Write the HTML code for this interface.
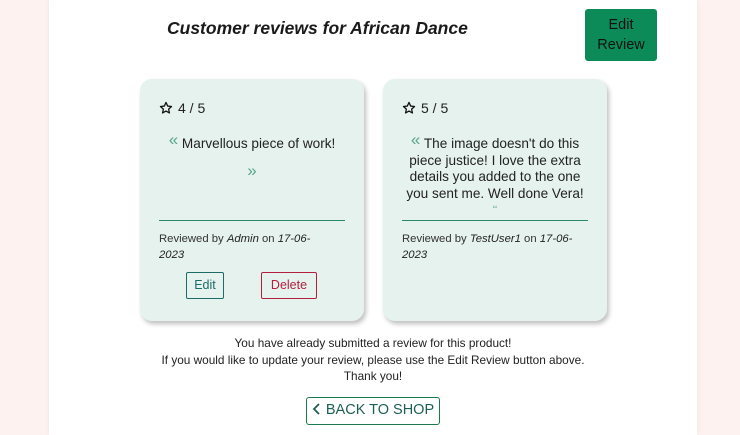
<!DOCTYPE html>
<html><head><meta charset="utf-8">
<style>
*{margin:0;padding:0;box-sizing:border-box}
html,body{width:740px;height:435px;overflow:hidden;background:#fdf2ef;font-family:"Liberation Sans",sans-serif;color:#222}
.panel{position:absolute;left:49px;top:0;width:648px;height:435px;background:#fff;box-shadow:0 0 6px rgba(0,0,0,0.06)}
h1{position:absolute;left:167px;top:18px;font-size:17.5px;font-style:italic;font-weight:bold;color:#1a1a1a;letter-spacing:0px}
.editbtn{position:absolute;left:585px;top:9px;width:72px;height:52px;background:#0c8a57;border-radius:3px;color:#111;font-size:14.5px;text-align:center;line-height:20px;padding-top:6px}
.card{position:absolute;top:79px;width:224px;height:242px;background:#e6f2ee;border-radius:12px;box-shadow:2px 3px 5px rgba(0,0,0,0.25)}
.rating{position:absolute;left:19px;top:21px;font-size:14px;color:#222;display:flex;align-items:center;gap:5px}
.text{position:absolute;left:16px;right:16px;top:52px;text-align:center;font-size:13.6px;line-height:20px;color:#222}
.q{color:#5aa58a;font-size:17px;vertical-align:3px}
.line{position:absolute;left:19px;right:19px;top:141px;border-top:1px solid #2a8a68}
.by{position:absolute;left:19px;right:19px;top:152px;font-size:11.3px;line-height:16px;color:#333}
.by i{color:#222}
.btn{position:absolute;top:193px;height:27px;background:transparent;font-size:12.5px;line-height:25px;text-align:center;border-radius:2px}
.msg{position:absolute;left:49px;width:648px;top:335px;text-align:center;font-size:11.8px;line-height:16.5px;color:#222}
.back{position:absolute;left:306px;top:397px;width:134px;height:28px;border:1.5px solid #1a7a4e;border-radius:3px;color:#1d5f54;font-size:14.5px;line-height:25px;text-align:center}
</style></head><body>
<div class="panel"></div>
<h1>Customer reviews for African Dance</h1>
<div class="editbtn">Edit<br>Review</div>

<div class="card" style="left:140px">
  <div class="rating"><svg width="14" height="14" viewBox="0 0 24 24"><path d="M12 2.5l2.9 6.2 6.6.7-5 4.5 1.4 6.6L12 17.2l-5.9 3.3 1.4-6.6-5-4.5 6.6-.7z" fill="none" stroke="#111" stroke-width="2.2" stroke-linejoin="round"/></svg>4 / 5</div>
  <div class="text" style="top:51px"><span class="q">&laquo;</span> Marvellous piece of work!<br><div style="margin-top:7px"><span class="q">&raquo;</span></div></div>
  <div class="line"></div>
  <div class="by">Reviewed by <i>Admin</i> on <i>17-06-<br>2023</i></div>
  <div class="btn" style="left:46px;width:38px;border:1px solid #1d6b66;color:#1d6b66">Edit</div>
  <div class="btn" style="left:121px;width:56px;border:1px solid #b3203f;color:#b3203f">Delete</div>
</div>

<div class="card" style="left:383px">
  <div class="rating"><svg width="14" height="14" viewBox="0 0 24 24"><path d="M12 2.5l2.9 6.2 6.6.7-5 4.5 1.4 6.6L12 17.2l-5.9 3.3 1.4-6.6-5-4.5 6.6-.7z" fill="none" stroke="#111" stroke-width="2.2" stroke-linejoin="round"/></svg>5 / 5</div>
  <div class="text" style="top:53px;line-height:16.5px"><span class="q">&laquo;</span> The image doesn't do this piece justice! I love the extra details you added to the one you sent me. Well done Vera!<br><span class="q" style="font-size:11px">&lsquo;&lsquo;</span></div>
  <div class="line"></div>
  <div class="by">Reviewed by <i>TestUser1</i> on <i>17-06-<br>2023</i></div>
</div>

<div class="msg">You have already submitted a review for this product!<br>If you would like to update your review, please use the Edit Review button above.<br>Thank you!</div>
<div class="back"><svg width="9" height="12" viewBox="0 0 9 12" style="vertical-align:-1px;margin-right:5px"><path d="M7 1L2 6l5 5" fill="none" stroke="#1d5f54" stroke-width="1.8"/></svg>BACK TO SHOP</div>
</body></html>
